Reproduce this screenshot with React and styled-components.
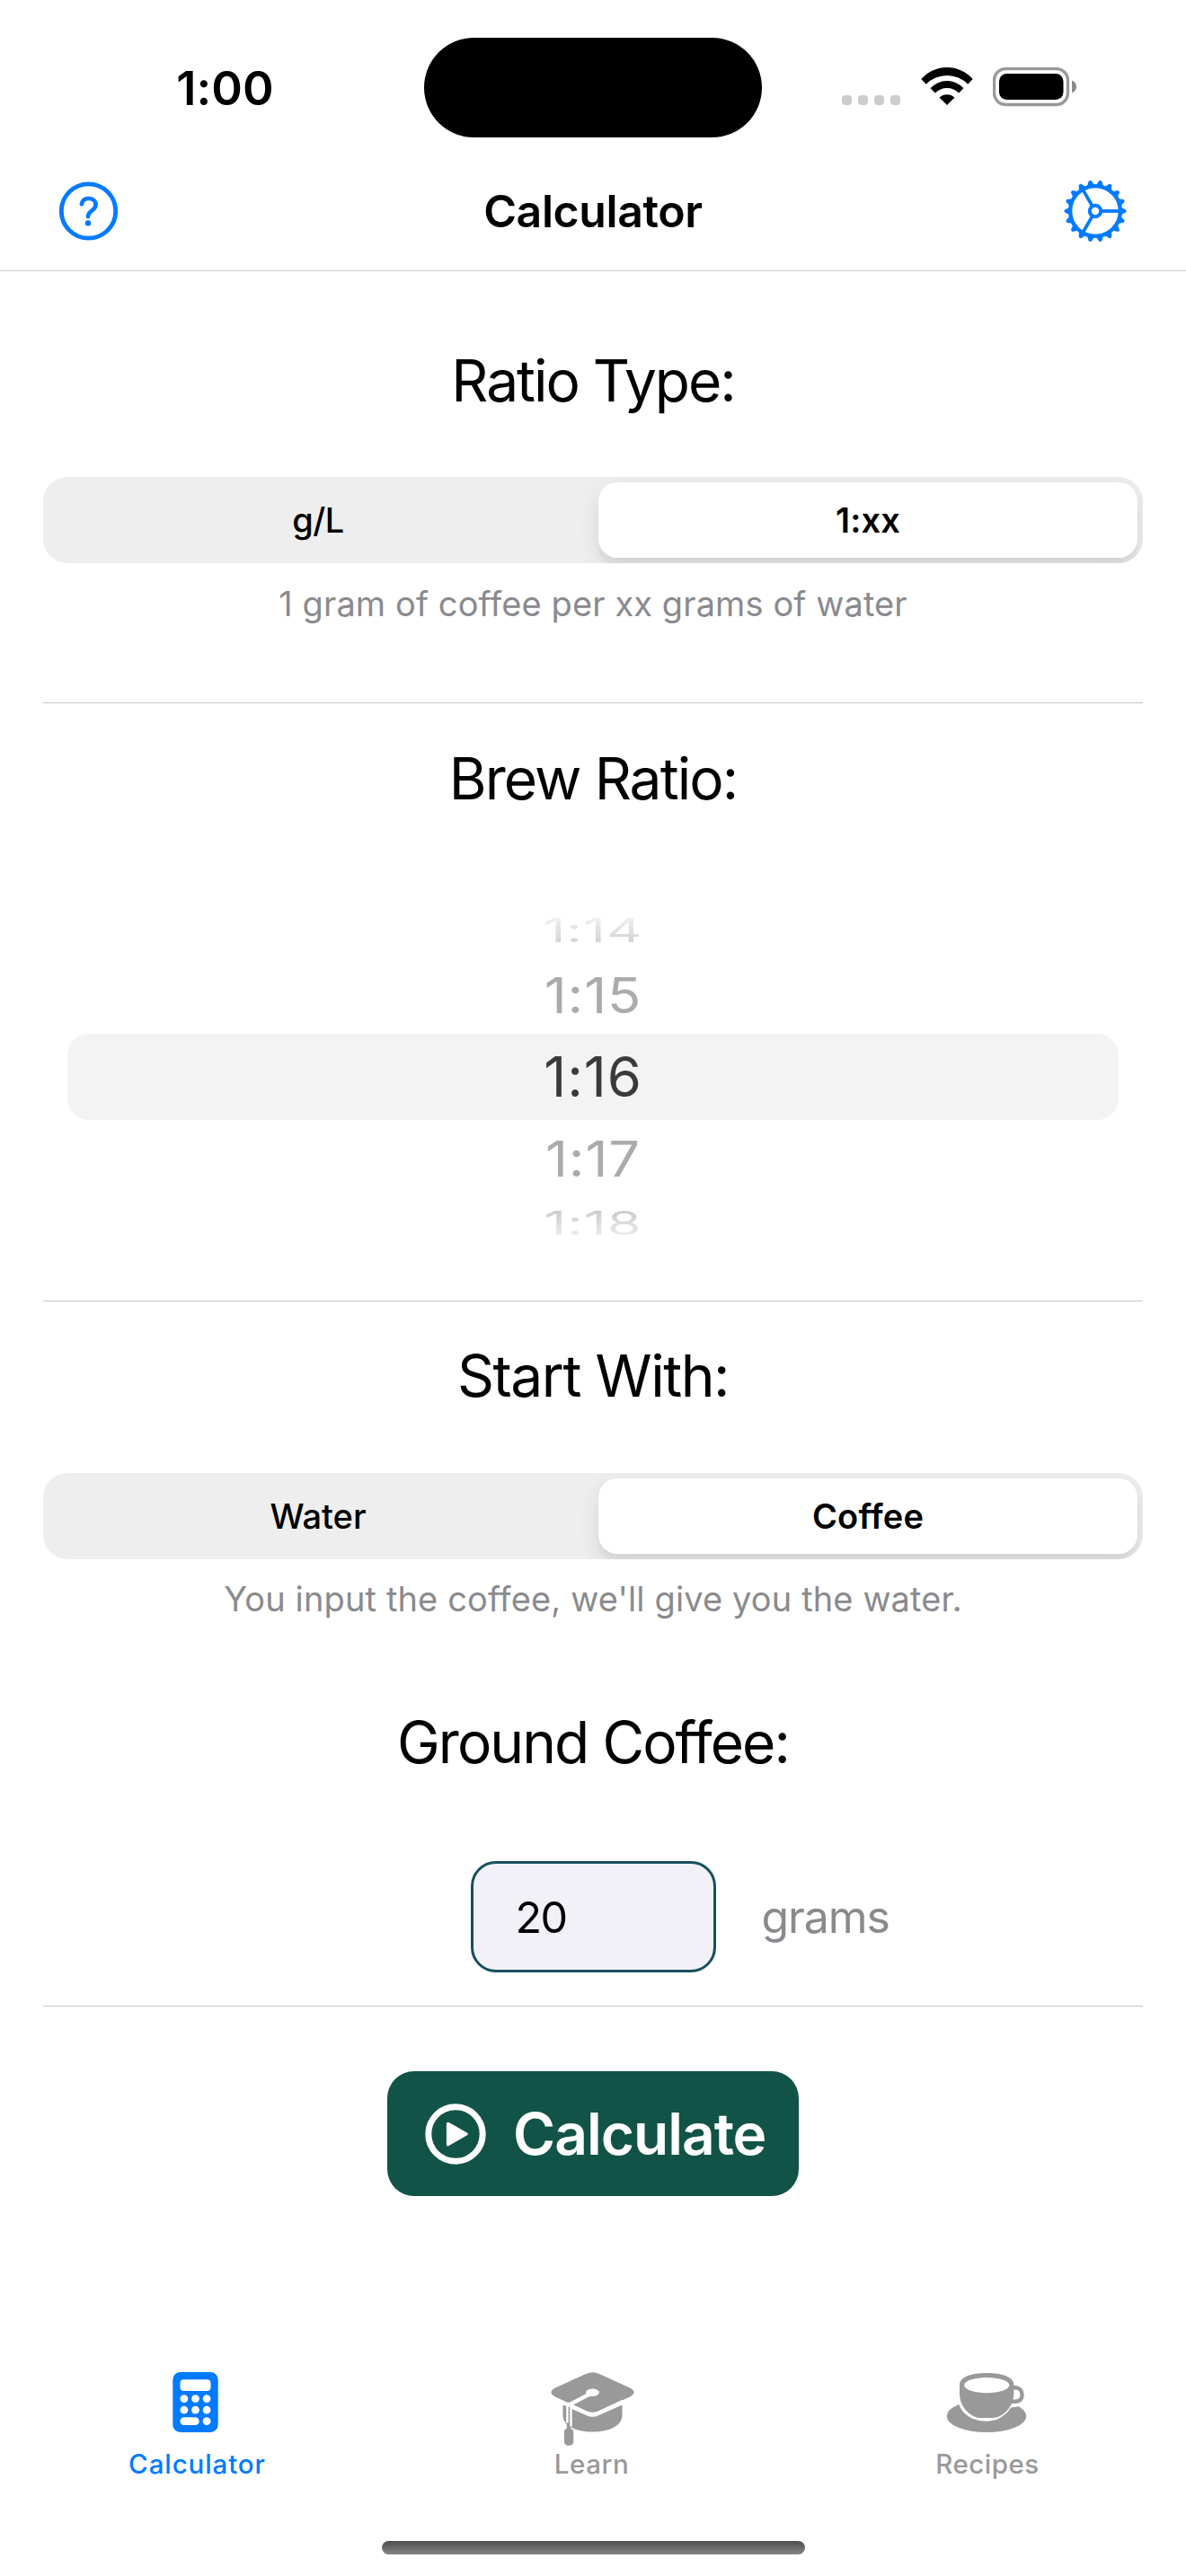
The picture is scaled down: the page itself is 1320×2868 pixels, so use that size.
import React from "react";
import styled, { createGlobalStyle, css } from "styled-components";

const BLUE = "#007aff";
const GREY = "#999999";
const SECONDARY = "#8a8a8e";

const GlobalStyle = createGlobalStyle`
  *, *::before, *::after { box-sizing: border-box; }
  html, body { margin: 0; padding: 0; background: #fff; }
  body { font-family: Inter, "Liberation Sans", sans-serif; color: #000; }
  button, input { font: inherit; border: 0; margin: 0; padding: 0; background: none; color: inherit; }
  svg { display: block; flex: none; }
`;

const Screen = styled.div`
  display: flex;
  flex-direction: column;
  width: 1320px;
  height: 2868px;
  overflow: hidden;
  background: #fff;
`;

const StatusBar = styled.header`
  display: grid;
  grid-template-columns: 472px 376px 472px;
  align-items: center;
  height: 194px;
`;

const Clock = styled.div`
  padding: 2px 0 0 29px;
  text-align: center;
  font-size: 52.5px;
  font-weight: 600;
  line-height: 64px;
  letter-spacing: ${(p) => p.$track}px;
`;

const Island = styled.div`
  height: 111px;
  border-radius: 56px;
  background: #000;
`;

const StatusIcons = styled.div`
  display: flex;
  gap: 22.5px;
  padding-left: 89px;
`;

const NavBar = styled.nav`
  display: grid;
  grid-template-columns: 200px 1fr 200px;
  align-items: center;
  height: 108px;
  padding: 0 66px 26px;
  border-bottom: 1px solid #c6c6c8;
`;

const IconButton = styled.button`
  display: flex;
  justify-content: ${(p) => (p.$end ? "flex-end" : "flex-start")};
  color: ${BLUE};
`;

const Title = styled.h1`
  margin: 0;
  text-align: center;
  font-size: 50px;
  font-weight: 600;
  line-height: 60px;
  letter-spacing: ${(p) => p.$track}px;
`;

const Content = styled.main`
  display: flex;
  flex-direction: column;
  padding: 0 48px;
`;

const Heading = styled.h2`
  margin: ${(p) => p.$top}px 0 0;
  text-align: center;
  font-size: 64px;
  font-weight: 400;
  line-height: 80px;
  letter-spacing: ${(p) => p.$track}px;
`;

const Segmented = styled.div`
  display: grid;
  grid-template-columns: 1fr 600px;
  gap: 6px;
  height: 96px;
  margin-top: ${(p) => p.$top}px;
  padding: 6px 6px 6px 0;
  border-radius: 27px;
  background: #eeeeee;
  overflow: hidden;
`;

const Segment = styled.button`
  border-radius: 21px;
  text-align: center;
  font-size: 38px;
  font-weight: 500;
  line-height: 84px;
  letter-spacing: ${(p) => p.$track}px;
  ${(p) =>
    p.$selected &&
    css`
      font-weight: 600;
      background: #fff;
      box-shadow: 0 9px 24px rgba(0, 0, 0, 0.1), 0 9px 3px rgba(0, 0, 0, 0.03);
    `}
`;

const Caption = styled.p`
  margin: ${(p) => p.$top}px 0 0;
  text-align: center;
  font-size: 38px;
  line-height: 50px;
  letter-spacing: ${(p) => p.$track}px;
  color: ${SECONDARY};
`;

const Divider = styled.hr`
  width: 100%;
  height: 1px;
  margin: ${(p) => p.$top}px 0 0;
  border: 0;
  background: #c6c6c8;
`;

const Picker = styled.div`
  display: flex;
  flex-direction: column;
  align-items: center;
  margin-top: 100px;
`;

const ROW_PLACES = {
  center: css`
    height: 96px;
    width: 1170px;
    border-radius: 24px;
    background: #f3f3f3;
    color: #3a3a3a;
  `,
  near: css`
    height: 86px;
    color: #ababab;
  `,
  far: css`
    height: 58px;
    color: transparent;
  `,
};

const PickerRow = styled.div`
  display: flex;
  align-items: center;
  justify-content: center;
  font-size: 61.5px;
  line-height: 1.21;
  letter-spacing: 0.9px;
  ${(p) => ROW_PLACES[p.$place]}
`;

const PickerValue = styled.span`
  transform: scaleY(${(p) => p.$squash});
  ${(p) =>
    p.$fade &&
    css`
      background: linear-gradient(${p.$fade});
      background-clip: text;
    `}
`;

const AmountRow = styled.div`
  display: grid;
  grid-template-columns: 1fr 273px 1fr;
  align-items: center;
  height: 124px;
  margin-top: 92px;
`;

const AmountInput = styled.input`
  grid-column: 2;
  width: 273px;
  height: 124px;
  padding: 0 47px;
  border: 3px solid #17505c;
  border-radius: 28px;
  background: #f2f1f7;
  font-size: 48.5px;
  letter-spacing: ${(p) => p.$track}px;
  outline: none;
`;

const Unit = styled.span`
  padding-left: 51px;
  font-size: 50px;
  line-height: 60px;
  letter-spacing: ${(p) => p.$track}px;
  color: ${SECONDARY};
`;

const CalculateButton = styled.button`
  display: flex;
  align-items: center;
  align-self: center;
  gap: 30px;
  width: 458px;
  height: 139px;
  margin-top: 72px;
  padding-left: 42px;
  border-radius: 30px;
  background: #125347;
  color: #fff;
  font-size: 64px;
  font-weight: 600;
  line-height: 80px;
  letter-spacing: ${(p) => p.$track}px;
`;

const TabBar = styled.nav`
  display: grid;
  grid-template-columns: 439px 439px 442px;
  width: 1320px;
  margin-top: 185px;
`;

const Tab = styled.button`
  display: flex;
  flex-direction: column;
  align-items: center;
  color: ${(p) => (p.$active ? BLUE : GREY)};
`;

const TabLabel = styled.span`
  font-size: 29.5px;
  font-weight: 500;
  line-height: 40px;
  letter-spacing: ${(p) => p.$track}px;
`;

const HomeIndicator = styled.div`
  align-self: center;
  width: 471px;
  height: 15px;
  margin-top: 66px;
  border-radius: 8px;
  background: linear-gradient(#4e4e4e, #848484);
`;

const SignalIcon = () => (
  <svg width="65" height="44" viewBox="0 0 65 44" fill="#cccccc">
    {[0, 18, 36, 54].map((x) => (
      <rect key={x} x={x} y="31" width="11" height="11" rx="4" />
    ))}
  </svg>
);

const WifiIcon = () => (
  <svg width="58" height="44" viewBox="0 0 58 44">
    <path d="M0.3 13A38.2 38.2 0 0 1 57.7 13L52.2 18.7A32.6 32.6 0 0 0 5.8 18.7Z" />
    <path d="M10.6 23.2A25 25 0 0 1 47.4 23.2L42.2 28.4A19 19 0 0 0 15.8 28.4Z" />
    <path d="M20.5 33.5A12.4 12.4 0 0 1 37.5 33.5L29 42Z" />
  </svg>
);

const BatteryIcon = () => (
  <svg width="94" height="44" viewBox="0 0 94 44">
    <rect x="1.5" y="1.5" width="82" height="40" rx="13" fill="none" stroke="#999" strokeWidth="3.4" />
    <rect x="7" y="7" width="71.5" height="29" rx="8.5" />
    <path d="M88 14.5C91.4 15.8 93 18.3 93 21.5S91.4 27.2 88 28.5Z" fill="#8a8a8a" />
  </svg>
);

const HelpIcon = () => (
  <svg width="65" height="66" viewBox="0 0 65 66" fill="none" stroke="currentColor">
    <circle cx="32.5" cy="33" r="30.2" strokeWidth="4.8" />
    <path
      d="M24.8 25.2C25.6 21.2 28.4 19 32.6 19C37.4 19 40.6 21.8 40.6 25.8C40.6 28.8 39.2 30.6 36.4 32.4C33.2 34.6 32 36.2 32 38.6V39.2"
      strokeWidth="4.6"
      strokeLinecap="round"
      strokeLinejoin="round"
    />
    <circle cx="32" cy="46.4" r="3.2" fill="currentColor" stroke="none" />
  </svg>
);

const TEETH = Array.from({ length: 18 }, (_, i) => i * 20);

const GearIcon = () => (
  <svg width="70" height="70" viewBox="-35 -35 70 70" fill="none" stroke="currentColor">
    <circle r="27.9" strokeWidth="4.4" />
    <circle r="6.2" strokeWidth="4" />
    {[0, 120, 240].map((a) => (
      <path key={a} d="M7.6 0H27" strokeWidth="3.8" transform={`rotate(${a})`} />
    ))}
    {TEETH.map((a) => (
      <path
        key={a}
        d="M29 -4L33.9 -1.6Q35.2 0 33.9 1.6L29 4Z"
        fill="currentColor"
        stroke="none"
        transform={`rotate(${a})`}
      />
    ))}
  </svg>
);

const PlayIcon = () => (
  <svg width="68" height="68" viewBox="0 0 68 68">
    <circle cx="34" cy="34" r="30.2" fill="none" stroke="currentColor" strokeWidth="7" />
    <path
      d="M25.6 22.4L46 33.9L25.6 45.6Z"
      fill="currentColor"
      stroke="currentColor"
      strokeWidth="3.4"
      strokeLinejoin="round"
    />
  </svg>
);

const CalculatorIcon = () => (
  <svg width="120" height="93" viewBox="2.5 0 120 93">
    <rect x="34.8" y="11" width="50.4" height="67" rx="8.5" fill="currentColor" />
    <g fill="#fff">
      <rect x="43" y="19.3" width="34" height="12.7" rx="4" />
      {[43, 55.6, 68.2].map((x) =>
        [36.2, 48.8].map((y) => <rect key={`${x}-${y}`} x={x} y={y} width="8.8" height="8.8" rx="4.4" />)
      )}
      <rect x="43" y="61.3" width="21.2" height="8.7" rx="4.3" />
      <rect x="68.2" y="61.3" width="8.8" height="8.8" rx="4.4" />
    </g>
  </svg>
);

const CapIcon = () => (
  <svg width="120" height="93" viewBox="-1.5 0 120 93">
    <path
      d="M26 47.5V59C26 70.5 40 77.6 59 77.6S92 70.5 92 59V47.5L65.5 59.3Q59 62.3 52.5 59.3Z"
      fill="currentColor"
    />
    <path
      d="M51.5 13Q59 9.3 66.5 13L100.5 28.6Q109.6 33.6 100.5 38.6L66 54.6Q59 57.6 52 54.6L17.5 38.6Q8.4 33.6 17.5 28.6Z"
      fill="currentColor"
    />
    <path d="M58 34.4L32.7 47.6V68" fill="none" stroke="#fff" strokeWidth="4.4" />
    <path d="M30.5 46.5L52 56.4Q59 59.4 66 56.4L93 43.6" fill="none" stroke="#fff" strokeWidth="4.2" />
    <ellipse cx="59" cy="33.7" rx="7.4" ry="4.2" fill="#fff" />
    <path
      d="M30.8 50.6L34.6 49V73.6Q37.8 75.2 37.8 78.4V88Q37.8 92.8 32.6 92.8T27.4 88V78.4Q27.4 75.2 30.3 73.6V66L30.8 68Z"
      fill="currentColor"
    />
    <path d="M30.9 48.5V67.6M35 49V71.4" fill="none" stroke="#fff" strokeWidth="2.4" />
  </svg>
);

const CupIcon = () => (
  <svg width="120" height="93" viewBox="0 0 120 93">
    <ellipse cx="59" cy="60" rx="44.3" ry="18" fill="currentColor" />
    <path
      d="M24 38H89L92.5 46.4L87.5 48.6C81.5 58.6 72 65.8 59 65.8C44 65.8 31 58.4 27.6 44.6Z"
      fill="#fff"
    />
    <path d="M88 44.5L99 44L96 48.6Q92 50.4 86 50.2Z" fill="#fff" />
    <path d="M24 20H98V44H24Z" fill="#fff" />
    <path
      d="M88 28.2H90.5C95.5 28.2 98.6 31.6 98.6 36.3S95.4 43.8 90.5 43.8H86"
      fill="none"
      stroke="currentColor"
      strokeWidth="4.4"
    />
    <path
      d="M29 25C29 16.6 41.5 12 59 12S89.3 16.6 89.3 25V35C89.3 50.5 76 62 66 62H52C42 62 29 50.5 29 35Z"
      fill="currentColor"
    />
    <ellipse cx="59.2" cy="25.6" rx="25" ry="8.6" fill="#fff" />
  </svg>
);

const WHEEL = [
  { value: "1:14", place: "far", squash: 0.6, fade: "#f4f4f4 10%, #cdcdcd 90%" },
  { value: "1:15", place: "near", squash: 0.9 },
  { value: "1:16", place: "center", squash: 1 },
  { value: "1:17", place: "near", squash: 0.9 },
  { value: "1:18", place: "far", squash: 0.6, fade: "#c8c8c8 10%, #f0f0f0 90%" },
];

const TABS = [
  { label: "Calculator", Icon: CalculatorIcon, track: 0.9 },
  { label: "Learn", Icon: CapIcon, track: 0.6 },
  { label: "Recipes", Icon: CupIcon, track: 0.5 },
];

export default function App() {
  return (
    <>
      <GlobalStyle />
      <Screen>
        <StatusBar>
          <Clock $track={0.1}>1:00</Clock>
          <Island />
          <StatusIcons>
            <SignalIcon />
            <WifiIcon />
            <BatteryIcon />
          </StatusIcons>
        </StatusBar>
        <NavBar>
          <IconButton aria-label="Help">
            <HelpIcon />
          </IconButton>
          <Title $track={-0.4}>Calculator</Title>
          <IconButton $end aria-label="Settings">
            <GearIcon />
          </IconButton>
        </NavBar>
        <Content>
          <Heading $top={82} $track={-2.05}>Ratio Type:</Heading>
          <Segmented $top={67}>
            <Segment $track={-0.6}>g/L</Segment>
            <Segment $selected $track={0.2}>1:xx</Segment>
          </Segmented>
          <Caption $top={20} $track={0.1}>1 gram of coffee per xx grams of water</Caption>
          <Divider $top={85} />

          <Heading $top={44} $track={-1.9}>Brew Ratio:</Heading>
          <Picker>
            {WHEEL.map(({ value, place, squash, fade }) => (
              <PickerRow key={value} $place={place}>
                <PickerValue $squash={squash} $fade={fade}>{value}</PickerValue>
              </PickerRow>
            ))}
          </Picker>
          <Divider $top={57} />

          <Heading $top={43} $track={-1.45}>Start With:</Heading>
          <Segmented $top={68}>
            <Segment $track={0}>Water</Segment>
            <Segment $selected $track={0.15}>Coffee</Segment>
          </Segmented>
          <Caption $top={19} $track={0.13}>You input the coffee, we'll give you the water.</Caption>

          <Heading $top={95} $track={-1.95}>Ground Coffee:</Heading>
          <AmountRow>
            <AmountInput defaultValue="20" aria-label="Ground coffee" $track={-1.6} />
            <Unit $track={-1.1}>grams</Unit>
          </AmountRow>
          <Divider $top={37} />

          <CalculateButton $track={-1}>
            <PlayIcon />
            Calculate
          </CalculateButton>
        </Content>
        <TabBar>
          {TABS.map(({ label, Icon, track }, i) => (
            <Tab key={label} $active={i === 0}>
              <Icon />
              <TabLabel $track={track}>{label}</TabLabel>
            </Tab>
          ))}
        </TabBar>
        <HomeIndicator />
      </Screen>
    </>
  );
}
